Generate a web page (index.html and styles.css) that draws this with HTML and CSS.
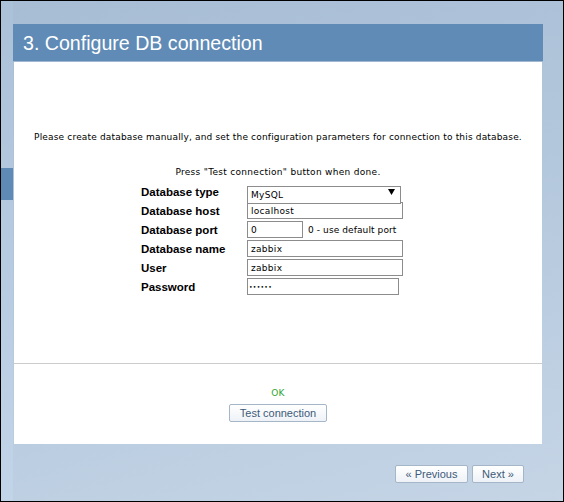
FILE: index.html
```html
<!DOCTYPE html>
<html>
<head>
<meta charset="utf-8">
<link rel="stylesheet" href="styles.css">
</head>
<body>
<div class="frame">
  <aside class="side"><div class="side-item"></div></aside>
  <main class="main">
    <section class="panel">
      <h1 class="title">3. Configure DB connection</h1>
      <div class="content">
        <div class="body-area">
          <p class="intro">Please create database manually, and set the configuration parameters for connection to this database.</p>
          <p class="hint">Press "Test connection" button when done.</p>
          <div class="form">
            <label class="lbl">Database type</label>
            <div class="field">
              <span class="select-wrap">
                <select class="select"><option>MySQL</option></select>
                <svg class="arrow" width="7" height="6" viewBox="0 0 7 6"><path d="M0 0H7L3.5 6Z" fill="#000"/></svg>
              </span>
            </div>
            <label class="lbl">Database host</label>
            <div class="field"><input class="inp inp-wide" value="localhost"></div>
            <label class="lbl">Database port</label>
            <div class="field"><input class="inp inp-port" value="0"><span class="note">0 - use default port</span></div>
            <label class="lbl">Database name</label>
            <div class="field"><input class="inp inp-wide" value="zabbix"></div>
            <label class="lbl">User</label>
            <div class="field"><input class="inp inp-wide" value="zabbix"></div>
            <label class="lbl">Password</label>
            <div class="field"><input class="inp inp-pass" type="password" value="zabbix"></div>
          </div>
        </div>
        <div class="test-area">
          <div class="ok">OK</div>
          <button class="btn btn-test">Test connection</button>
        </div>
      </div>
    </section>
    <nav class="nav">
      <button class="btn btn-prev">« Previous</button>
      <button class="btn btn-next">Next »</button>
    </nav>
  </main>
</div>
</body>
</html>
```
FILE: styles.css
```css
html, body {
  margin: 0;
  padding: 0;
}
body {
  width: 564px;
  height: 502px;
  box-sizing: border-box;
  border: 1px solid #000;
  background: linear-gradient(165deg, #a7bdd4 0%, #b3c7dc 45%, #c5d5e6 100%);
  font-family: "DejaVu Sans", Verdana, sans-serif;
  overflow: hidden;
}
.frame {
  display: flex;
  height: 100%;
}
.side {
  width: 12px;
  flex: none;
  padding-top: 167px;
  background: linear-gradient(180deg, #abc1d8 0%, #c2d4e8 100%);
}
.side-item {
  height: 32px;
  background: #5f8ab5;
}
.main {
  flex: 1;
  padding-top: 23px;
  padding-right: 19px;
  display: flex;
  flex-direction: column;
}
.panel {
  width: 530px;
}
.title {
  margin: 0;
  height: 37px;
  line-height: 38px;
  border-bottom: 1px solid #9fb7cf;
  background: #5f8bb6;
  color: #fff;
  font-family: "Liberation Sans", Arial, sans-serif;
  font-weight: normal;
  font-size: 19.6px;
  padding-left: 10px;
}
.content {
  margin: 0 1px;
  height: 382px;
  background: #fff;
  display: flex;
  flex-direction: column;
}
.body-area {
  border-bottom: 1px solid #cccccc;
  padding-top: 69px;
  box-sizing: border-box;
  height: 302px;
}
.intro, .hint {
  margin: 0;
  font-size: 9px;
  line-height: 12px;
  color: #000;
  text-align: center;
}
.intro {
  letter-spacing: 0.17px;
}
.hint {
  margin-top: 23px;
  letter-spacing: 0.3px;
}
.form {
  display: grid;
  grid-template-columns: 106px auto;
  grid-auto-rows: 19px;
  align-items: center;
  margin-left: 127px;
  margin-top: 4px;
}
.lbl {
  font-family: "Liberation Sans", Arial, sans-serif;
  font-weight: bold;
  font-size: 11.5px;
  color: #000;
}
.field {
  display: flex;
  align-items: center;
}
.inp {
  box-sizing: border-box;
  height: 17px;
  border: 1px solid #8c8c8c;
  padding: 0 3px;
  font-family: "DejaVu Sans", sans-serif;
  font-size: 9px;
  letter-spacing: 0.3px;
  color: #000;
  background: #fff;
  outline: none;
}
.inp-wide { width: 156px; }
.inp-port { width: 56px; }
.inp-pass { width: 152px; font-size: 6px; padding: 0 1px; }
.note {
  margin-left: 5px;
  font-size: 9px;
  letter-spacing: 0.1px;
}
.select-wrap {
  position: relative;
  display: inline-block;
  height: 18px;
}
.select {
  -webkit-appearance: none;
  appearance: none;
  box-sizing: border-box;
  width: 154px;
  height: 18px;
  border: 1px solid #8c8c8c;
  border-radius: 0;
  background: #fff;
  padding: 0 3px;
  font-family: "DejaVu Sans", sans-serif;
  font-size: 9px;
  letter-spacing: 0.3px;
  color: #000;
  outline: none;
}
.arrow {
  position: absolute;
  right: 6px;
  top: 6px;
  pointer-events: none;
}
.test-area {
  display: flex;
  flex-direction: column;
  align-items: center;
  padding-top: 23px;
}
.ok {
  color: #2ea52e;
  font-size: 9px;
  line-height: 12px;
  letter-spacing: 0.3px;
}
.btn {
  box-sizing: border-box;
  height: 18px;
  border: 1px solid #a6b6c9;
  border-radius: 2px;
  background: linear-gradient(180deg, #ffffff 0%, #eef2f7 100%);
  color: #3e5a79;
  font-family: "Liberation Sans", Arial, sans-serif;
  font-size: 11px;
  padding: 0;
  line-height: 16px;
}
.btn-test {
  width: 98px;
  margin-top: 5px;
}
.nav {
  display: flex;
  justify-content: flex-end;
  gap: 4px;
  margin-top: 21px;
  width: 511px;
}
.btn-prev { width: 73px; }
.btn-next { width: 52px; }
```
